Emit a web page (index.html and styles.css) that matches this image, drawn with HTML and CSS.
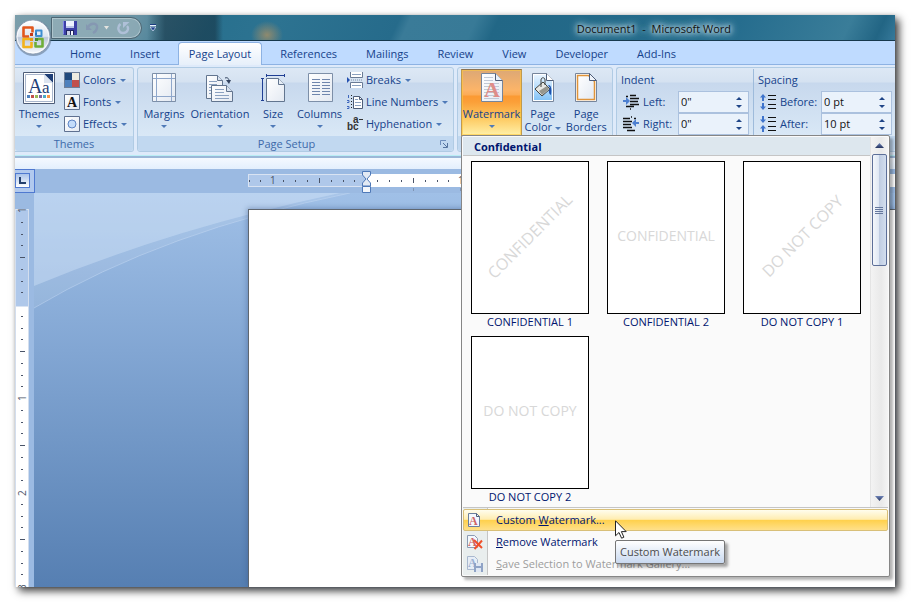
FILE: index.html
```html
<!DOCTYPE html>
<html lang="en">
<head>
<meta charset="utf-8">
<title>Document1 - Microsoft Word</title>
<link rel="stylesheet" href="styles.css">
</head>
<body>
<svg class="defs" width="0" height="0" aria-hidden="true">
  <defs>
    <linearGradient id="paper" x1="0" y1="0" x2="1" y2="1"><stop offset="0" stop-color="#fff"/><stop offset="1" stop-color="#e3e9f2"/></linearGradient>
    <linearGradient id="sky" x1="0" y1="0" x2="0" y2="1"><stop offset="0" stop-color="#e8f4ff"/><stop offset="1" stop-color="#84c4f8"/></linearGradient>
    <linearGradient id="arrow" x1="0" y1="0" x2="0" y2="1"><stop offset="0" stop-color="#6d83b8"/><stop offset="1" stop-color="#26345f"/></linearGradient>
    <linearGradient id="orb" x1="0" y1="0" x2="0" y2="1"><stop offset="0" stop-color="#fff"/><stop offset=".48" stop-color="#dfe6f0"/><stop offset=".52" stop-color="#bcc8da"/><stop offset="1" stop-color="#fafcff"/></linearGradient>
  </defs>
</svg>
<div class="window">
  <header class="titlebar">
    <div class="quick-access">
      <button type="button" aria-label="Save"><svg width="14" height="14" viewBox="0 0 14 14"><path d="M0 0h14v14H1L0 13z" fill="#3b3fa6"/><path d="M0 0h1v13H0z" fill="#7f86e6"/><path d="M3 0h8v7H3z" fill="#eef3ff"/><path d="M3 5h8v2H3z" fill="#b9c4e8"/><path d="M3 9h8v5H3z" fill="#20245e"/><path d="M4 10h3v4H4z" fill="#c9cfe6"/><path d="M8 10h2v4H8z" fill="#f6f8ff"/></svg></button>
      <button type="button" aria-label="Undo"><svg width="14" height="14" viewBox="0 0 14 14"><path d="M2 6c3-5 10-4 9 1-.4 2-2 4-4 5" fill="none" stroke="#8598b2" stroke-width="2.4"/><path d="M0 3v6h6z" fill="#8598b2"/></svg></button>
      <svg class="undo-caret" width="5" height="4" viewBox="0 0 5 4"><path d="M0 0h5L2.500 3.500z" fill="#e3e3df"/></svg>
      <button type="button" aria-label="Repeat"><svg width="14" height="14" viewBox="0 0 14 14"><path d="M3.500 3c-4 3-2 9 2.500 9 5 0 6-5 4-7" fill="none" stroke="#afc0d8" stroke-width="2.400"/><path d="M6 1h6.500L6 7z" fill="#afc0d8"/></svg></button>
    </div>
    <button type="button" class="customize" aria-label="Customize Quick Access Toolbar"><svg width="6" height="8" viewBox="0 0 6 8"><path d="M0 0h6v2H0z" fill="#e8f0ff"/><path d="M0 0h6v1H0z" fill="#1c3d80"/><path d="M0 3h6L3 7z" fill="#1f3f8c" stroke="#dce8fa" stroke-width=".7"/></svg></button>
    <h1>Document1&nbsp; -&nbsp; Microsoft Word</h1>
  </header>
  <button type="button" class="office" aria-label="Office Button">
    <svg width="38" height="38" viewBox="0 0 38 38">
      <circle cx="18.500" cy="19" r="18" fill="#5c7186" opacity=".55"/><circle cx="18" cy="18" r="17" fill="url(#orb)" stroke="#8a9bb1"/><circle cx="18" cy="18" r="16" fill="none" stroke="#fff" opacity=".8"/>
      <g fill="none" stroke-width="2.600" stroke-linejoin="round"><path d="M14 17.500H8.500V8.500h9v5" stroke="#e2571c"/><path d="M21 11.500h5.500V17H21z" stroke="#3d8ed0" stroke-width="2"/><path d="M15 20H8.500v8h8v-5" stroke="#f3b21b"/><path d="M20.500 23v4.500h7V20H23" stroke="#6fae39"/></g>
      <path d="M15 14h3v3h-3z" fill="#c43a18"/><path d="M20 14h2v2h-2z" fill="#2c72b8"/><path d="M15 19h3v3h-3z" fill="#e79a12"/><path d="M20 19h3v3h-3z" fill="#4a8f30"/>
    </svg>
  </button>
  <nav class="tabs" aria-label="Ribbon tabs">
    <a href="#">Home</a><a href="#">Insert</a><a href="#" class="active" aria-current="page">Page Layout</a><a href="#">References</a><a href="#">Mailings</a><a href="#">Review</a><a href="#">View</a><a href="#">Developer</a><a href="#">Add-Ins</a>
  </nav>

  <div class="ribbon">
    <section class="group themes">
      <div class="tools">
        <button type="button" class="big w-themes">
          <svg width="32" height="32" viewBox="0 0 32 32"><path d="M.5.5h31v31H.5z" fill="#fff" stroke="#4e5d78"/><path d="M2.500 2.500h27v27h-27z" fill="#fff" stroke="#a9b6cc"/><path d="M21 2h9v9z" fill="#1f3f77"/><path d="M21 2v9h9z" fill="#dce4f0"/><text x="5" y="21" class="serif-lg">A</text><text x="19" y="21" class="serif-md">a</text><path d="M4 23h3v3H4z" fill="#4f81bd"/><path d="M8 23h3v3H8z" fill="#c0504d"/><path d="M12 23h3v3h-3z" fill="#9bbb59"/><path d="M16 23h3v3h-3z" fill="#8064a2"/><path d="M20 23h3v3h-3z" fill="#4bacc6"/><path d="M24 23h3v3h-3z" fill="#f79646"/></svg>
          <span>Themes</span><i class="caret"></i>
        </button>
        <div class="stack">
          <button type="button"><svg width="16" height="16" viewBox="0 0 16 16"><path d="M0 0h16v16H0z" fill="#6e7f99"/><path d="M1 1h7v7H1z" fill="#1f497d"/><path d="M8 1h7v7H8z" fill="#eeece1"/><path d="M1 8h7v7H1z" fill="#4f81bd"/><path d="M8 8h7v7H8z" fill="#c0504d"/></svg><span>Colors</span><i class="caret"></i></button>
          <button type="button"><svg width="16" height="16" viewBox="0 0 16 16"><path d="M.5.5h15v15H.5z" fill="url(#paper)" stroke="#5f7190"/><text x="3" y="13" class="font-a">A</text></svg><span>Fonts</span><i class="caret"></i></button>
          <button type="button"><svg width="16" height="16" viewBox="0 0 16 16"><path d="M.5.5h15v15H.5z" fill="url(#paper)" stroke="#5f7190"/><circle cx="8" cy="8" r="4" fill="#c3dcfa" stroke="#5d84c4"/></svg><span>Effects</span><i class="caret"></i></button>
        </div>
      </div>
      <h2>Themes</h2>
    </section>

    <section class="group setup">
      <div class="tools">
        <button type="button" class="big w-margins">
          <svg width="32" height="32" viewBox="0 0 32 32"><path d="M5 2h23v28H5z" fill="#a9b8cc"/><path d="M4.500 1.500h23v28h-23z" fill="url(#paper)" stroke="#7d8fa8"/><path d="M8.500 2v27M23.500 2v27M5 6.500h22M5 24.500h22" stroke="#8fa7cb"/></svg>
          <span>Margins</span><i class="caret"></i>
        </button>
        <button type="button" class="big w-orientation">
          <svg width="32" height="32" viewBox="0 0 32 32"><path d="M2.500 3.500h11l5 5v18h-16z" fill="url(#paper)" stroke="#62758f"/><path d="M13.500 3.500v5h5" fill="#d8e2ef" stroke="#62758f"/><path d="M5 9.500h8M5 12.500h8M5 15.500h4M5 18.500h3M5 21.500h3" stroke="#8ba1c0"/><path d="M7.500 13.500h15l6 6v10h-21z" fill="url(#paper)" stroke="#62758f"/><path d="M22.500 13.500v6h6" fill="#d8e2ef" stroke="#62758f"/><path d="M11 17.500h9M11 20.500h9M11 23.500h14M11 26.500h14" stroke="#8ba1c0"/><path d="M21 6c3-1 4 1 4 3" fill="none" stroke="#33435f"/><path d="M22 8h5l-2 4z" fill="#33435f"/></svg>
          <span>Orientation</span><i class="caret"></i>
        </button>
        <button type="button" class="big w-size">
          <svg width="32" height="32" viewBox="0 0 32 32"><path d="M9.500 6.500h12l6 6v17h-18z" fill="url(#paper)" stroke="#62758f"/><path d="M21.500 6.500v6h6" fill="#e6edf6" stroke="#62758f"/><path d="M9 3.500h18M9.500 2v3M27.500 2v3M5.500 7v22M4 6.500h3M4 28.500h3" stroke="#203f94"/></svg>
          <span>Size</span><i class="caret"></i>
        </button>
        <button type="button" class="big w-columns">
          <svg width="32" height="32" viewBox="0 0 32 32"><path d="M5 2h24v28H5z" fill="#a9b8cc"/><path d="M4.500 1.500h24v28h-24z" fill="url(#paper)" stroke="#7d8fa8"/><path d="M8 7.500h8M18 7.500h8M8 10.500h8M18 10.500h8M8 13.500h8M18 13.500h8M8 16.500h8M18 16.500h8M8 19.500h8M18 19.500h8M8 22.500h8M18 22.500h8" stroke="#6f86ad"/></svg>
          <span>Columns</span><i class="caret"></i>
        </button>
        <div class="stack">
          <button type="button"><svg width="16" height="16" viewBox="0 0 16 16"><path d="M3.500 0v5.500h12V0M3.500 16v-5.500h12V16" fill="#fff" stroke="#6a7b95"/><path d="M5 2.500h9M5 13.500h9" stroke="#8ba1c0"/><path d="M4 8h12" stroke="#7d8fa8" stroke-dasharray="1 1"/><path d="M0 5l3 3-3 3z" fill="#2451b0"/></svg><span>Breaks</span><i class="caret"></i></button>
          <button type="button"><svg width="16" height="16" viewBox="0 0 16 16"><path d="M6.500 2.500h6l3 3v9h-9z" fill="#fff" stroke="#4e5d78"/><path d="M12.500 2.500v3h3" fill="none" stroke="#4e5d78"/><path d="M8 5.500h3M8 8.500h6M8 11.500h6" stroke="#8ba1c0"/><path d="M4.500 1v14" stroke="#222" stroke-dasharray="1 2"/><path d="M1.500 1v3M0 6.500h2v2H0M0 12.500h2v2H0" fill="none" stroke="#3f67bd"/></svg><span>Line Numbers</span><i class="caret"></i></button>
          <button type="button"><svg width="16" height="16" viewBox="0 0 16 16"><text x="0" y="14" class="hyph">bc</text><text x="6" y="7" class="hyph">a</text><path d="M12 3.500h4" stroke="#333"/></svg><span>Hyphenation</span><i class="caret"></i></button>
        </div>
      </div>
      <h2>Page Setup</h2>
      <button type="button" class="launcher" aria-label="Page Setup dialog"><svg width="8" height="8" viewBox="0 0 8 8"><path d="M.5 5V.5H6" fill="none" stroke="#6f8fbd"/><path d="M3 3l4 4M7.500 3v4.500H3" fill="none" stroke="#56749f"/></svg></button>
    </section>

    <section class="group background">
      <div class="tools">
        <div class="anchor">
          <button type="button" class="big w-watermark pressed" aria-expanded="true">
            <svg width="32" height="32" viewBox="0 0 32 32"><path d="M5.500 1.500h14l7 7v21h-21z" fill="url(#paper)" stroke="#76859b"/><path d="M8 5.500h9M8 8.500h9M8 11.500h15M8 14.500h15M8 17.500h15M8 20.500h15M8 23.500h15M8 26.500h15" stroke="#c0c9d6"/><path d="M19.500 1.500v7h7" fill="#e9f0f8" stroke="#4e5d78"/><text x="8" y="25" class="wm-a">A</text></svg>
            <span>Watermark</span><i class="caret"></i>
          </button>
          <div class="dropdown" role="menu">
            <div class="gallery">
              <div class="gallery-main">
                <h3>Confidential</h3>
                <div class="thumbs">
                  <figure><div class="sheet"><span class="wm diagonal">CONFIDENTIAL</span></div><figcaption>CONFIDENTIAL 1</figcaption></figure>
                  <figure><div class="sheet"><span class="wm">CONFIDENTIAL</span></div><figcaption>CONFIDENTIAL 2</figcaption></figure>
                  <figure><div class="sheet"><span class="wm diagonal">DO NOT COPY</span></div><figcaption>DO NOT COPY 1</figcaption></figure>
                  <figure><div class="sheet"><span class="wm">DO NOT COPY</span></div><figcaption>DO NOT COPY 2</figcaption></figure>
                </div>
              </div>
              <div class="scrollbar">
                <svg width="9" height="5" viewBox="0 0 9 5"><path d="M0 5l4.500-5L9 5z" fill="url(#arrow)"/></svg>
                <div class="thumb"></div>
                <svg class="down" width="9" height="5" viewBox="0 0 9 5"><path d="M0 0l4.500 5L9 0z" fill="url(#arrow)"/></svg>
              </div>
            </div>
            <div class="menu">
              <button type="button" class="hover"><svg width="16" height="16" viewBox="0 0 16 16"><path d="M1.500 1.500h8l3 3v10h-11z" fill="#f4f8fd" stroke="#6b7f9e"/><path d="M9.500 1.500v3h3" fill="none" stroke="#4e5d78"/><text x="2" y="13" class="mini-a">A</text></svg><span>Custom <u>W</u>atermark...</span></button>
              <button type="button"><svg width="16" height="16" viewBox="0 0 16 16"><path d="M.5 1.500h7l3 3v9H.5z" fill="#f4f8fd" stroke="#8b9bb4"/><text x="1" y="12" class="mini-a">A</text><path d="M7 6l8 8M15 6.500L7.500 15" stroke="#f0502a" stroke-width="2"/></svg><span><u>R</u>emove Watermark</span></button>
              <button type="button" disabled><svg width="16" height="16" viewBox="0 0 16 16"><path d="M.5.500h7l3 3v10H.5z" fill="#e6edf6" stroke="#a9b8cf"/><text x="1" y="11" class="mini-a dim">A</text><path d="M7 7h9v9H7z" fill="#8fa3c6"/><path d="M9 7h5v3H9zM9 12h5v4H9z" fill="#dfe7f3"/></svg><span><u>S</u>ave Selection to Watermark Gallery...</span></button>
            </div>
            <div class="tooltip" role="tooltip">Custom Watermark</div>
            <svg class="pointer" width="12" height="19" viewBox="0 0 12 19"><path d="M.5.800v15l3.500-3.300 2.600 5.700 2.300-1-2.500-5.600h4.800z" fill="#fff" stroke="#222"/></svg>
          </div>
        </div>
        <button type="button" class="big two w-color">
          <svg width="32" height="32" viewBox="0 0 32 32"><path d="M5.500 1.500h14l7 7v21h-21z" fill="#fff" stroke="#76859b"/><path d="M7 3h12v6h6v19H7z" fill="url(#sky)"/><path d="M19.500 1.500v7h7" fill="#fff" stroke="#4e5d78"/><path d="M8 17l8-7 7 7-8 7z" fill="#e8e8e4" stroke="#44443f"/><path d="M12 19l8-5 2 3-7 6z" fill="#96968e"/><path d="M14 15V8c0-3 4-3 4 0v5" fill="none" stroke="#44443f"/><path d="M21 13c3 0 4 3 3 10-2-1-3-4-1-7z" fill="#1d50ac"/></svg>
          <span>Page<br>Color <i class="caret"></i></span>
        </button>
        <button type="button" class="big two w-borders">
          <svg width="32" height="32" viewBox="0 0 32 32"><path d="M5.500 1.500h14l7 7v21h-21z" fill="#fff" stroke="#76859b"/><path d="M7.500 3.500h11l6 6v18h-17z" fill="url(#paper)" stroke="#e0943a" stroke-width="1.500"/><path d="M19.500 1.500v7h7z" fill="#eef3fa" stroke="#4e5d78"/></svg>
          <span>Page<br>Borders</span>
        </button>
      </div>
      <h2></h2>
    </section>

    <section class="group paragraph">
      <div class="tools">
        <div class="fields">
          <h3>Indent</h3>
          <div class="field w-indent">
            <svg width="16" height="16" viewBox="0 0 16 16"><path d="M7 1.500h6M7 4.500h9M7 7.500h8M7 10.500h9M3 12.500h8M3 2.500h2M7 15h1" stroke="#111" stroke-width="1.300"/><path d="M0 6h3V3l4 4-4 4V8H0z" fill="#4c7fd0"/></svg>
            <label for="il">Left:</label><div class="spin"><input id="il" type="text" value='0"'><div><button type="button" aria-label="Increase left"></button><button type="button" class="dn" aria-label="Decrease left"></button></div></div>
          </div>
          <div class="field w-indent">
            <svg width="16" height="16" viewBox="0 0 16 16"><path d="M0 2.500h7M0 5.500h9M0 8.500h8M0 11.500h9M4 14.500h8M8 1h1M11 2.500h2" stroke="#111" stroke-width="1.300"/><path d="M16 6h-3V3L9 7l4 4V8h3z" fill="#4c7fd0"/></svg>
            <label for="ir">Right:</label><div class="spin"><input id="ir" type="text" value='0"'><div><button type="button" aria-label="Increase right"></button><button type="button" class="dn" aria-label="Decrease right"></button></div></div>
          </div>
        </div>
        <div class="fields spacing">
          <h3>Spacing</h3>
          <div class="field w-spacing">
            <svg width="16" height="16" viewBox="0 0 16 16"><path d="M8 1.500h8M8 5.500h8M8 10.500h8M8 14.500h8" stroke="#111"/><path d="M3 0l3 3.500H4V7H2V3.500H0zM3 16l3-3.500H4V9H2v3.500H0z" fill="#3f74cc"/></svg>
            <label for="sb">Before:</label><div class="spin"><input id="sb" type="text" value="0 pt"><div><button type="button" aria-label="Increase before"></button><button type="button" class="dn" aria-label="Decrease before"></button></div></div>
          </div>
          <div class="field w-spacing">
            <svg width="16" height="16" viewBox="0 0 16 16"><path d="M8 1.500h8M8 5.500h8M8 10.500h8M8 14.500h8" stroke="#111"/><path d="M3 7l3-3.500H4V0H2v3.500H0zM3 9l3 3.500H4V16H2v-3.500H0z" fill="#3f74cc"/></svg>
            <label for="sa">After:</label><div class="spin"><input id="sa" type="text" value="10 pt"><div><button type="button" aria-label="Increase after"></button><button type="button" class="dn" aria-label="Decrease after"></button></div></div>
          </div>
        </div>
      </div>
      <h2></h2>
    </section>
  </div>

  <div class="shelf"></div>

  <main class="workspace">
    <div class="corner"><button type="button" aria-label="Left tab stop"><svg width="7" height="7" viewBox="0 0 7 7"><path d="M1 0v6h6" fill="none" stroke="#24406e" stroke-width="2"/></svg></button></div>
    <div class="h-ruler">
      <svg class="h-scale" width="100%" height="20">
        <defs><pattern id="hticks" x="24" width="94" height="13" patternUnits="userSpaceOnUse"><path d="M11 6h1v2h-1zM23 6h1v2h-1zM35 6h1v2h-1zM47 4h1v5h-1zM59 6h1v2h-1zM71 6h1v2h-1zM82 6h1v2h-1z" fill="#4a5468"/></pattern></defs>
        <rect width="100%" height="13" fill="#fff"/><rect width="118" height="13" fill="#afc8ea"/><path d="M0 .500h118M0 12.500h118M.500 0v13" stroke="#d9e3f2"/>
        <rect width="100%" height="13" fill="url(#hticks)"/>
        <text x="22" y="10" class="num">1</text><text x="210" y="10" class="num">1</text><path d="M165 14h1v3h-1zM212 14h1v3h-1z" fill="#7f93b2"/>
      </svg>
      <svg class="indent-marker" width="9" height="22" viewBox="0 0 9 22"><path d="M.5.500h8v3.500L5 8l3.500 4v3h-8v-3L4 8 .5 4z" fill="#e3eaf4" stroke="#4f79b8"/><path d="M.500 15.500h8v6h-8z" fill="#f4f7fb" stroke="#4f79b8"/></svg>
    </div>
    <div class="v-ruler">
      <svg width="14" height="100%">
        <defs><pattern id="vticks" y="3" width="14" height="94" patternUnits="userSpaceOnUse"><path d="M6 10h2v1H6zM6 22h2v1H6zM6 33h2v1H6zM5 45h5v1H5zM6 57h2v1H6zM6 69h2v1H6zM6 80h2v1H6z" fill="#4a5468"/></pattern></defs>
        <rect width="14" height="100%" fill="#fff"/><rect width="14" height="97" fill="#afc8ea"/><path d="M0 .500h13.500M0 97.500h13.500" stroke="#d9e3f2"/>
        <rect width="14" height="100%" fill="url(#vticks)"/><path d="M.500 0v1000M13.500 0v1000" stroke="#d3deee"/>
        <text class="num" transform="translate(11 4) rotate(-90)">1</text><text class="num" transform="translate(11 192) rotate(-90)">1</text><text class="num" transform="translate(11 287) rotate(-90)">2</text><text class="num" transform="translate(11 381) rotate(-90)">3</text>
      </svg>
    </div>
    <div class="canvas">
      <svg class="swoosh" width="320" height="120" viewBox="0 0 320 120"><path d="M0 0h316Q130 38 0 115z" fill="#fff" opacity=".1"/><path d="M0 0h306Q140 35 0 93z" fill="#d5e6fa" opacity=".4"/><path d="M316 0Q130 38 0 115" fill="none" stroke="#c5daf3" opacity=".5"/></svg>
      <div class="page"></div>
    </div>
  </main>
</div>
</body>
</html>
```

FILE: styles.css
```css
* { box-sizing: border-box; }

body {
  margin: 0;
  padding: 15px 16px 15px 15px;
  background: #fff;
  color: #15428b;
  font: 11px/14px "Open Sans", "Noto Sans", sans-serif;
}

h1, h2, h3, figure { margin: 0; font: inherit; }
svg { display: block; flex: none; }
button { margin: 0; padding: 0; border: 0; background: none; color: inherit; font: inherit; }
.defs { position: absolute; }

.window {
  position: relative;
  display: flex;
  flex-direction: column;
  min-height: calc(100vh - 30px);
  background: #bfdbff;
  box-shadow: 4px 4px 8px rgba(0, 0, 0, .75), 0 0 3px rgba(0, 0, 0, .15);
}

/* Title bar */
.titlebar {
  display: flex;
  align-items: center;
  height: 26px;
  border-bottom: 1px solid #16384c;
  background:
    radial-gradient(ellipse 16px 14px at 252px 20px, #8f8a6e, transparent),
    linear-gradient(90deg, transparent 132px, rgba(25, 60, 78, .7) 150px, rgba(25, 60, 78, .7) 200px, transparent 208px),
    linear-gradient(115deg, #7b9eab 0, #6992a3 110px, #28708e 180px, #2d7391 240px, #266b8b 350px, #3a7b98 360px, #387a97 420px, #226786 440px, #266d8e 660px, #3a7d99 760px, #226584 790px, #36799a);
}
.quick-access {
  display: flex;
  align-items: center;
  height: 22px;
  margin-left: 36px;
  padding: 0 10px 0 11px;
  border: 1px solid #4d6673;
  border-radius: 0 11px 11px 0;
  background: rgba(150, 176, 186, .75);
  box-shadow: inset 0 0 0 1px rgba(215, 228, 232, .45);
}
.quick-access button:nth-of-type(2) { margin-left: 9px; }
.undo-caret { margin: 0 8px 0 4px; }
.customize { margin-left: 8px; }
.titlebar h1 {
  margin-left: auto;
  padding: 2px 164px 0 0;
  color: #111;
  text-shadow: 0 0 4px #cfe4ec, 0 0 6px #b5d3de, 0 0 8px #b5d3de, 0 0 10px #b5d3de;
}
.office { position: absolute; top: 4px; left: 0; z-index: 2; }

/* Tabs */
.tabs {
  display: flex;
  gap: 7px;
  height: 24px;
  padding: 1px 0 0 44px;
  border-bottom: 1px solid #8db2e3;
  background: #bfdbff;
}
.tabs a {
  height: 23px;
  padding: 0 11px;
  color: inherit;
  line-height: 24px;
  text-decoration: none;
}
.tabs .active {
  border: 1px solid #8db2e3;
  border-bottom: 0;
  border-radius: 4px 4px 0 0;
  background: linear-gradient(#fff, #e6effa);
  padding: 0 10px;
  line-height: 22px;
}

/* Ribbon */
.ribbon {
  display: grid;
  grid-template-columns: 119px 317px 156px 1fr;
  gap: 3px;
  padding: 2px 0 3px;
  border-bottom: 1px solid #b9eef5;
  background: #deeafa;
}
.group {
  position: relative;
  min-width: 0;
  border: 1px solid #b0cbe4;
  border-radius: 3px;
  background: linear-gradient(#dde8f5 0, #d5e2f1 14px, #c7d8ed 15px, #d9e8f6 68px);
}
.themes { border-left: 0; border-radius: 0 3px 3px 0; }
.paragraph { border-right: 0; border-radius: 3px 0 0 3px; }
.group h2 {
  height: 15px;
  border-radius: 0 0 3px 3px;
  background: #c1d8f0;
  color: #3e6aaa;
  line-height: 16px;
  text-align: center;
}
.setup h2 { padding-right: 18px; }
.tools { display: flex; height: 68px; padding: 1px 3px 0; }
.themes .tools { padding-left: 0; }

.big {
  display: flex;
  flex-direction: column;
  align-items: center;
  padding-top: 3px;
  white-space: nowrap;
}
.big span { margin-top: 3px; text-align: center; }
.big .caret { margin-top: 4px; }
.two span { line-height: 13px; }
.two .caret { display: inline-block; margin: 0; vertical-align: middle; }
.w-themes { width: 48px; }
.w-margins { width: 46px; }
.w-orientation { width: 66px; }
.w-size { width: 40px; }
.w-columns { width: 53px; }
.w-watermark { width: 61px; }
.w-color { width: 42px; }
.w-borders { width: 46px; }

.caret {
  border: 3px solid transparent;
  border-top-color: #4f7ab8;
  border-bottom: 0;
}
.pressed {
  height: 67px;
  border: 1px solid #c09a4e;
  border-top-color: #8c7250;
  padding-top: 2px;
  background: linear-gradient(#dca876 0, #fcb468 20px, #fbab55 25px, #fb9a33 26px, #fb9f38 32px, #fdc960 48px, #fff0a8 100%);
  box-shadow: inset 0 0 0 1px rgba(255, 200, 60, .6);
}
.stack { margin-left: 1px; }
.stack button { display: flex; align-items: center; gap: 3px; height: 22px; white-space: nowrap; }
.stack .caret { margin-left: 1px; }
.launcher { position: absolute; right: 5px; bottom: 3px; }

.serif-lg { font: 20px "Liberation Serif", serif; fill: #1f3f77; }
.serif-md { font: 17px "Liberation Serif", serif; fill: #1f3f77; }
.font-a { font: bold 14px "Liberation Serif", serif; fill: #111; }
.hyph { font: bold 10px "Liberation Sans", sans-serif; fill: #333; }
.wm-a { font: bold 22px "Liberation Serif", serif; fill: #df8d88; }
.mini-a { font: bold 12px "Liberation Serif", serif; fill: #cf6664; }
.dim { fill: #9bb0d2; }
.num { font: 10px "Open Sans", sans-serif; fill: #4a5468; }

.fields { padding-left: 1px; }
.fields h3 { height: 22px; line-height: 22px; }
.spacing { margin-left: 4px; padding-left: 4px; border-left: 1px solid #9ebbdb; }
.field { display: grid; align-items: center; height: 22px; }
.w-indent { grid-template-columns: 22px 35px 71px; }
.w-spacing { grid-template-columns: 22px 41px 71px; }
.field svg { margin-left: 2px; }
.spin {
  display: flex;
  height: 22px;
  border: 1px solid #abc1de;
  background: #eaf2fb;
}
.spin input {
  flex: 1;
  min-width: 0;
  padding: 0 2px;
  border: 0;
  background: none;
  color: #111;
  font: inherit;
}
.spin div { display: flex; flex-direction: column; justify-content: center; gap: 5px; width: 12px; }
.spin button { width: 5px; border: 3px solid transparent; border-bottom-color: #1f4587; border-top: 0; height: 3px; }
.spin .dn { border-top: 3px solid #1f4587; border-bottom: 0; }

/* Watermark gallery */
.anchor { position: relative; }
.dropdown {
  position: absolute;
  top: 66px;
  left: 0;
  z-index: 3;
  width: 429px;
  padding: 1px;
  border: 1px solid #868686;
  border-radius: 2px;
  background: #fafafa;
  color: #00156e;
  box-shadow: 3px 3px 3px rgba(0, 0, 0, .3);
}
.gallery { display: flex; height: 371px; border-bottom: 1px solid #c5c5c5; }
.gallery-main { flex: 1; }
.gallery h3 {
  height: 19px;
  padding-left: 11px;
  border-bottom: 1px solid #c5c5c5;
  background: #dde7ee;
  font-weight: bold;
  line-height: 19px;
}
.thumbs { display: grid; grid-template-columns: repeat(3, 118px); gap: 6px 18px; padding: 5px 8px; }
figure { text-align: center; }
.sheet {
  display: flex;
  align-items: center;
  justify-content: center;
  height: 153px;
  margin-bottom: 1px;
  padding-bottom: 4px;
  border: 1px solid #000;
  background: #fff;
}
figcaption { height: 15px; color: #00156e; }
.wm { color: #d8d8d8; font-size: 14px; white-space: nowrap; }
.diagonal { font-size: 16px; transform: rotate(-45deg); }
.scrollbar {
  display: flex;
  flex-direction: column;
  align-items: center;
  width: 18px;
  padding: 6px 2px 6px 1px;
  border-left: 1px solid #e4e4e4;
  background: linear-gradient(90deg, #f3f3f3, #e9e9e9 60%, #f4f4f4);
}
.thumb {
  width: 15px;
  height: 112px;
  margin-top: 6px;
  border: 1px solid #5d6f98;
  border-radius: 2px;
  background:
    repeating-linear-gradient(#65779d 0 1px, transparent 1px 2px) center / 8px 7px no-repeat,
    linear-gradient(90deg, #f4f7fb, #dfe7f3 45%, #c0cde2 50%, #d3deee);
}
.down { margin-top: auto; }
.menu { padding-top: 1px; background: linear-gradient(90deg, #e9eeee 24px, #c5c5c5 24px 25px, #fafafa 25px); }
.menu button {
  display: flex;
  align-items: center;
  gap: 13px;
  width: 100%;
  height: 22px;
  padding: 0 4px;
  text-align: left;
}
.menu .hover {
  border: 1px solid #d8bf78;
  border-radius: 2px;
  padding: 0 3px;
  background: linear-gradient(#fffdee, #ffedb0 47%, #ffd04b 50%, #ffe08a);
}
.menu button:disabled { color: #9d9d9d; }
.tooltip {
  position: absolute;
  top: 404px;
  left: 153px;
  padding: 4px 4px;
  border: 1px solid #767676;
  border-radius: 2px;
  background: linear-gradient(#fff, #c9d9f0);
  color: #4c4c4c;
  white-space: nowrap;
  box-shadow: 3px 3px 3px rgba(0, 0, 0, .35);
}
.pointer { position: absolute; top: 384px; left: 153px; }

/* Document area */
.shelf {
  height: 13px;
  border-top: 2px solid #9bb8d8;
  background: linear-gradient(#f4f9ff, #e3effd);
}
.workspace {
  flex: 1;
  display: grid;
  grid-template-columns: 19px 1fr;
  grid-template-rows: 24px 1fr;
  background: #9bbae2;
}
.corner { position: relative; z-index: 1; width: 20px; border: 1px solid #4f79d0; border-left: 0; background: #b1c9ee; }
.corner button {
  display: grid;
  place-items: center;
  width: 15px;
  height: 15px;
  margin-top: 3px;
  border: 1px solid #4f79d0;
  background: linear-gradient(#a9c3ea, #fff);
}
.h-ruler { position: relative; padding: 5px 0 0 214px; }
.indent-marker { position: absolute; top: 2px; left: 328px; }
.v-ruler { padding-top: 16px; min-height: 0; overflow: hidden; contain: size; }
.canvas {
  position: relative;
  display: flex;
  padding: 16px 0 0 214px;
  background: linear-gradient(#a0c0e7, #82a6d3 40%, #567fb2);
}
.swoosh { position: absolute; top: 0; left: 0; }
.page {
  position: relative;
  flex: 1;
  border: solid #5f6770;
  border-width: 1px 0 0 1px;
  background: #fff;
  box-shadow: -1px -1px 5px rgba(50, 80, 130, .4);
}
```
